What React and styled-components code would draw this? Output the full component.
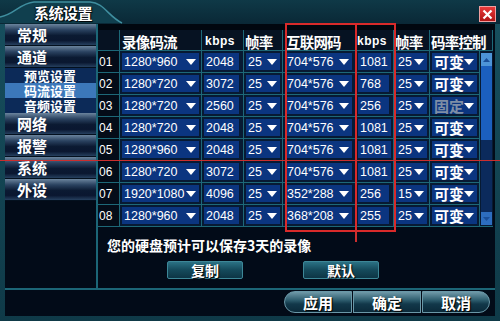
import React from "react"
import styled, { createGlobalStyle } from "styled-components"

const Global = createGlobalStyle`
    html, body {
        margin: 0;
        padding: 0;
        background: #000;
    }
    body {
        font-family: "Noto Sans CJK SC", "Liberation Sans", sans-serif;
    }
`

const Window = styled.div`
    position: relative;
    width: 500px;
    height: 321px;
    box-sizing: border-box;
    padding: 0 5px 5px 5px;
    background: linear-gradient(#17505f, #0f3a48);
    display: flex;
    flex-direction: column;
    overflow: hidden;
    color: #fff;
`
const TitleBar = styled.div`
    position: relative;
    height: 24px;
    margin: 0 -5px;
    padding: 0 4px 0 0;
    display: flex;
    align-items: center;
    justify-content: space-between;
    background: linear-gradient(#0f3947, #0a2836);
`
const TabShape = styled.svg`
    position: absolute;
    left: 0;
    top: 0;
`
const Title = styled.div`
    position: relative;
    padding-left: 34px;
    font-size: 15px;
    font-weight: 700;
    letter-spacing: -0.5px;
    text-shadow: 1px 1px 1px #000, -1px 0 1px #000;
`
const Close = styled.div`
    width: 17px;
    height: 16px;
    margin-top: 4px;
    box-sizing: border-box;
    border: 1px solid #f0a0a0;
    background: linear-gradient(#e83a3a, #b01414);
    display: flex;
    align-items: center;
    justify-content: center;
`
const Body = styled.div`
    flex: 1;
    display: flex;
    background: #020b18;
    border-bottom: 2px solid #1c6677;
`
const Nav = styled.div`
    width: 91px;
    border-right: 2px solid #1c6677;
    display: flex;
    flex-direction: column;
`
const NavItem = styled.div`
    height: 22px;
    box-sizing: border-box;
    padding-left: 12px;
    display: flex;
    align-items: center;
    font-size: 15px;
    font-weight: 700;
    background: linear-gradient(#6b849d 0%, #2a4260 28%, #0b1a32 55%, #0a1730 78%, #26405f 100%);
    border-bottom: 1px solid #03101e;
`
const SubItem = styled.div`
    height: 15px;
    line-height: 15px;
    padding-left: 19px;
    font-size: 13px;
    font-weight: 700;
    background: ${(p) => (p.$active ? "#3c78ba" : "#0c2a58")};
`
const Content = styled.div`
    flex: 1;
    display: flex;
    flex-direction: column;
`
const TopStrip = styled.div`
    height: 6px;
    background: #01070f;
`
const Grid = styled.div`
    display: grid;
    grid-template-columns: 22px 82px 42px 39px 73px 38px 36px 50px 13px;
    grid-template-rows: 21px repeat(8, 22px);
`
const Cell = styled.div`
    box-sizing: border-box;
    border-right: 1px solid #1d6878;
    border-bottom: 1px solid #1d6878;
    background: #071a33;
    display: flex;
    align-items: center;
    min-width: 0;
`
const Head = styled(Cell)`
    grid-column: ${(p) => (p.$span ? `span ${p.$span}` : "auto")};
    background: #061222;
    padding-left: ${(p) => p.$pl || 2}px;
    font-size: ${(p) => (p.$latin ? "12px" : "14.5px")};
    font-weight: 700;
    font-family: ${(p) => (p.$latin ? "\"Liberation Sans\", sans-serif" : "\"Noto Sans CJK SC\", sans-serif")};
    letter-spacing: ${(p) => (p.$latin ? "0.5px" : "-0.8px")};
    white-space: nowrap;
    padding-top: 2px;
`
const Index = styled(Cell)`
    background: #040c18;
    padding-left: 1px;
    font-size: 12px;
    font-family: "Liberation Sans", sans-serif;
`
const Field = styled.div`
    flex: 1;
    align-self: stretch;
    margin: 2px ${(p) => p.$mr || 2}px 2px 2px;
    padding: 0 3px 0 2px;
    display: flex;
    align-items: center;
    justify-content: space-between;
    background: #0b3580;
    font-size: ${(p) => (p.$cn ? "15px" : "12.5px")};
    font-weight: ${(p) => (p.$cn ? 700 : 400)};
    font-family: ${(p) => (p.$cn ? "\"Noto Sans CJK SC\", sans-serif" : "\"Liberation Sans\", sans-serif")};
    color: ${(p) => (p.$off ? "#7f8ea6" : "#fff")};
    white-space: nowrap;
`
const Scroll = styled.div`
    grid-column: 9;
    grid-row: 2 / span 8;
    box-sizing: border-box;
    border-bottom: 1px solid #1d6878;
    background: #071a33;
    padding: 2px 1px 1px 1px;
    display: flex;
    flex-direction: column;
`
const ScrollBtn = styled.div`
    height: 13px;
    background: ${(p) => (p.$up ? "#4d94d8" : "#2d6dbf")};
    display: flex;
    align-items: center;
    justify-content: center;
`
const Thumb = styled.div`
    height: 74px;
    background: #1b5fbe;
`
const Track = styled.div`
    flex: 1;
    background: #0b2a5c;
`
const Note = styled.div`
    margin: 9px 0 0 9px;
    font-size: 14px;
    font-weight: 700;
    line-height: 18px;
`
const ActionRow = styled.div`
    display: flex;
    gap: 60px;
    padding-left: 69px;
    margin-top: 7px;
`
const Action = styled.div`
    width: 76px;
    height: 18px;
    box-sizing: border-box;
    border: 1px solid #3d8797;
    border-radius: 2px;
    background: linear-gradient(#2b7184, #154a5b 50%, #0d3545);
    display: flex;
    align-items: center;
    justify-content: center;
    font-size: 14px;
    font-weight: 700;
    text-shadow: 1px 1px 1px #000;
`
const Footer = styled.div`
    height: 25px;
    background: #020b18;
    display: flex;
    justify-content: flex-end;
    align-items: flex-start;
    padding: 1px 5px 0 0;
    gap: 1px;
`
const FootBtn = styled.div`
    width: 68px;
    height: 22px;
    box-sizing: border-box;
    border: 1px solid #6a98a8;
    border-radius: ${(p) => (p.$first ? "11px 0 0 11px" : p.$last ? "0 11px 11px 0" : "0")};
    background: linear-gradient(#6f99a8 0%, #2f5e6f 40%, #12384a 60%, #0b2a3a 100%);
    display: flex;
    align-items: center;
    justify-content: center;
    font-size: 15px;
    font-weight: 700;
    text-shadow: 1px 1px 1px #000;
`
const RedBox = styled.div`
    position: absolute;
    top: 23px;
    left: ${(p) => p.$x}px;
    width: ${(p) => p.$w}px;
    height: 209px;
    box-sizing: border-box;
    border: 2px solid #d92a2a;
    pointer-events: none;
`
const RedLine = styled.div`
    position: absolute;
    background: #cc2e2e;
    pointer-events: none;
`

function Arrow() {
    return (
        <svg width="10" height="6" viewBox="0 0 10 6">
            <polygon points="0,0 10,0 5,6" fill="#fff" />
        </svg>
    )
}

function Tri({ up }) {
    return (
        <svg width="7" height="4" viewBox="0 0 7 4">
            <polygon points={up ? "0,4 7,4 3.5,0" : "0,0 7,0 3.5,4"} fill="#1a4f9a" />
        </svg>
    )
}

const rows = [
    ["01", "1280*960", "2048", "25", "704*576", "1081", "25", "可变"],
    ["02", "1280*720", "3072", "25", "704*576", "768", "25", "可变"],
    ["03", "1280*720", "2560", "25", "704*576", "256", "25", "固定"],
    ["04", "1280*720", "2048", "25", "704*576", "1081", "25", "可变"],
    ["05", "1280*960", "2048", "25", "704*576", "1081", "25", "可变"],
    ["06", "1280*720", "3072", "25", "704*576", "1081", "25", "可变"],
    ["07", "1920*1080", "4096", "25", "352*288", "256", "15", "可变"],
    ["08", "1280*960", "2048", "25", "368*208", "255", "25", "可变"],
]

export default function App() {
    return (
        <>
            <Global />
            <Window>
                <TitleBar>
                    <TabShape width="125" height="24" viewBox="0 0 125 24">
                        <path d="M0,17 C14,15 20,3 34,2 L90,2 C104,3 108,16 122,23 L0,23 Z" fill="#103f4e" />
                        <path d="M0,17 C14,15 20,3 34,2 L90,2 C104,3 108,16 122,23" fill="none" stroke="#3f8e9f" strokeWidth="1.5" />
                    </TabShape>
                    <Title>系统设置</Title>
                    <Close>
                        <svg width="11" height="11" viewBox="0 0 11 11">
                            <path d="M1.5,1.5 L9.5,9.5 M9.5,1.5 L1.5,9.5" stroke="#fff" strokeWidth="2.2" />
                        </svg>
                    </Close>
                </TitleBar>
                <Body>
                    <Nav>
                        <NavItem>常规</NavItem>
                        <NavItem>通道</NavItem>
                        <SubItem>预览设置</SubItem>
                        <SubItem $active>码流设置</SubItem>
                        <SubItem>音频设置</SubItem>
                        <NavItem>网络</NavItem>
                        <NavItem>报警</NavItem>
                        <NavItem>系统</NavItem>
                        <NavItem>外设</NavItem>
                    </Nav>
                    <Content>
                        <TopStrip />
                        <Grid>
                            <Head />
                            <Head $pl={2}>录像码流</Head>
                            <Head $latin $pl={3}>kbps</Head>
                            <Head $pl={1}>帧率</Head>
                            <Head $pl={3}>互联网码</Head>
                            <Head $latin $pl={1}>kbps</Head>
                            <Head $pl={1}>帧率</Head>
                            <Head $pl={1} $span={2}>码率控制</Head>
                            {rows.map((r) => (
                                <React.Fragment key={r[0]}>
                                    <Index>{r[0]}</Index>
                                    <Cell>
                                        <Field $mr={2}>
                                            {r[1]}
                                            <Arrow />
                                        </Field>
                                    </Cell>
                                    <Cell>
                                        <Field $mr={4}>{r[2]}</Field>
                                    </Cell>
                                    <Cell>
                                        <Field $mr={2}>
                                            {r[3]}
                                            <Arrow />
                                        </Field>
                                    </Cell>
                                    <Cell>
                                        <Field $mr={3}>
                                            {r[4]}
                                            <Arrow />
                                        </Field>
                                    </Cell>
                                    <Cell>
                                        <Field $mr={4}>{r[5]}</Field>
                                    </Cell>
                                    <Cell>
                                        <Field $mr={2}>
                                            {r[6]}
                                            <Arrow />
                                        </Field>
                                    </Cell>
                                    <Cell>
                                        <Field $cn $off={r[7] === "固定"} $mr={2}>
                                            {r[7]}
                                            <Arrow />
                                        </Field>
                                    </Cell>
                                </React.Fragment>
                            ))}
                            <Scroll>
                                <ScrollBtn $up>
                                    <Tri up />
                                </ScrollBtn>
                                <Thumb />
                                <Track />
                                <ScrollBtn>
                                    <Tri />
                                </ScrollBtn>
                            </Scroll>
                        </Grid>
                        <Note>您的硬盘预计可以保存3天的录像</Note>
                        <ActionRow>
                            <Action>复制</Action>
                            <Action>默认</Action>
                        </ActionRow>
                    </Content>
                </Body>
                <Footer>
                    <FootBtn $first>应用</FootBtn>
                    <FootBtn>确定</FootBtn>
                    <FootBtn $last>取消</FootBtn>
                </Footer>
                <RedBox $x={285} $w={72} />
                <RedBox $x={355} $w={41} />
                <RedLine style={{ left: 355, top: 230, width: 2, height: 12 }} />
                <RedLine style={{ left: 0, top: 160, width: 500, height: 1 }} />
            </Window>
        </>
    )
}
